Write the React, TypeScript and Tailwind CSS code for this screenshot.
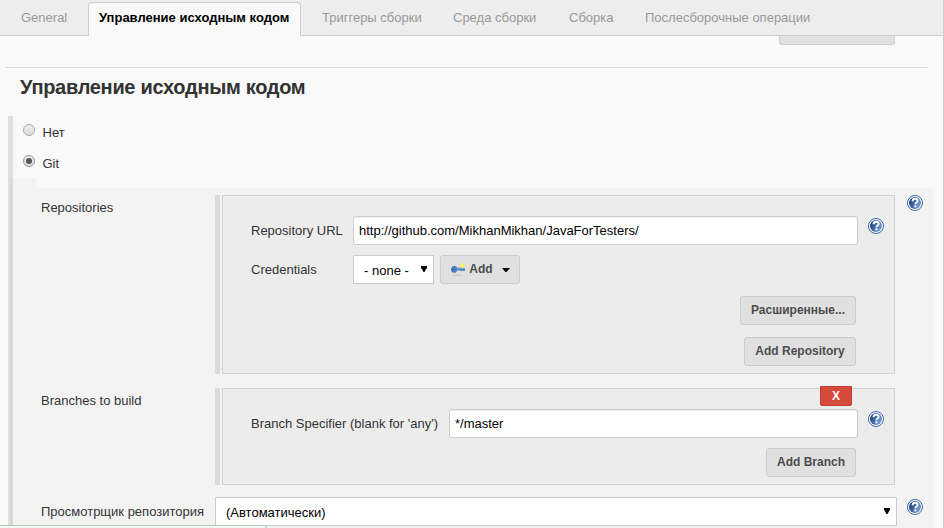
import React, { useId } from "react";

function HelpIcon({ className = "" }: { className?: string }) {
  const id = useId();
  return (
    <svg width="16" height="16" viewBox="0 0 16 16" className={`block shrink-0 ${className}`}>
      <defs>
        <linearGradient id={id} x1="0" y1="0.2" x2="1" y2="0.8">
          <stop offset="0.15" stopColor="#1f4786" />
          <stop offset="1" stopColor="#86a9dc" />
        </linearGradient>
      </defs>
      <circle cx="8" cy="8" r="7.500" fill="#fff" stroke="#3f66a4" strokeWidth="1" />
      <circle cx="8" cy="8" r="6" fill={`url(#${id})`} />
      <path d="M5.500 6.300C5.600 4.600 6.600 3.800 8.100 3.800c1.500 0 2.500.8 2.500 2.100 0 1.600-2.200 1.800-2.200 3.400" fill="none" stroke="#fff" strokeWidth="1.900" />
      <rect x="7.400" y="10.300" width="2" height="2" fill="#fff" />
    </svg>
  );
}

function KeyIcon() {
  return (
    <svg width="16" height="16" viewBox="0 0 16 16" className="block shrink-0">
      <ellipse cx="7" cy="14.300" rx="5.500" ry="0.7" fill="#c9c9c9" />
      <path d="M1 8.500C1 6.300 2.300 5 4.200 5c1.500 0 2.400.7 3 1.700H14l1 1v1.600l-1 .9-1.200-.8-1.300.9-1.200-.8H7.200c-.6 1.400-1.600 2.300-3 2.300C2.300 11.800 1 10.600 1 8.500z" fill="#4b80bb" />
      <path d="M6.500 7.700H14" stroke="#82abd6" strokeWidth="0.9" />
      <circle cx="3.500" cy="8.500" r="1" fill="#35659f" />
      <circle cx="12.500" cy="4.500" r="2.300" fill="#fbf04f" />
      <circle cx="12.500" cy="4.500" r="1" fill="#fffbb0" />
    </svg>
  );
}

function Arrow() {
  return (
    <svg width="6" height="6" viewBox="0 0 6 6" className="block shrink-0">
      <path d="M0 0h6v1.500L3.500 6h-1L0 1.500z" fill="#000" />
    </svg>
  );
}

function Radio({ checked = false }: { checked?: boolean }) {
  return (
    <span
      className={`flex h-3 w-3 items-center justify-center rounded-full border bg-gradient-to-b from-[#eeeeee] to-[#d9d9d9] ${checked ? "border-[#999999]" : "border-[#a8a8a8]"}`}
    >
      {checked && <span className="h-1.5 w-1.5 rounded-full bg-[#555555]" />}
    </span>
  );
}

function Button({ children, className = "" }: { children: React.ReactNode; className?: string }) {
  return (
    <button
      className={`flex h-[29px] shrink-0 items-center justify-center whitespace-nowrap rounded-[3px] border border-[#cccccc] bg-[#e0e0e0] pb-0.5 text-[12px] leading-4 font-bold text-[#4d4d4d] ${className}`}
    >
      {children}
    </button>
  );
}

function Field({ children, className = "" }: { children: React.ReactNode; className?: string }) {
  return (
    <div
      className={`flex h-[29px] shrink-0 items-center whitespace-nowrap rounded-[3px] border border-[#cccccc] bg-white pl-[5px] text-[13px] text-black shadow-[inset_0_1px_1px_rgba(0,0,0,0.08)] ${className}`}
    >
      {children}
    </div>
  );
}

function Panel({ children, className = "" }: { children: React.ReactNode; className?: string }) {
  return (
    <div className={`flex w-[680px] shrink-0 gap-0.5 ${className}`}>
      <div className="w-[5px] bg-[#d9d9d9]" />
      <div className="w-[673px] border border-[#d2d2d2] bg-[#ececec] pl-7">{children}</div>
    </div>
  );
}

function Tab({ children, className = "" }: { children: React.ReactNode; className?: string }) {
  return <div className={`shrink-0 whitespace-nowrap pt-2.5 text-[#999999] ${className}`}>{children}</div>;
}

export default function App() {
  return (
    <div className="relative flex h-[528px] w-[944px] flex-col overflow-hidden border-r border-[#cccccc] bg-[#f9f9f9] font-['Liberation_Sans',Arial,sans-serif] text-[13px] leading-4 text-[#333333]">
      <nav className="flex h-9 shrink-0 border-b border-[#cccccc] bg-[#ededed]">
        <Tab className="w-[88px] pl-[21px]">General</Tab>
        <div className="mt-0.5 h-[34px] w-[213px] shrink-0 whitespace-nowrap rounded-t-[4px] border border-b-0 border-[#cccccc] bg-[#f9f9f9] pt-[7px] pl-2.5 font-bold text-black">
          Управление исходным кодом
        </div>
        <Tab className="w-[152px] pl-[21px]">Триггеры сборки</Tab>
        <Tab className="w-[116px]">Среда сборки</Tab>
        <Tab className="w-[76px]">Сборка</Tab>
        <Tab>Послесборочные операции</Tab>
      </nav>

      <div className="ml-[779px] h-[9px] w-[116px] shrink-0 rounded-b-[3px] border border-t-0 border-[#cccccc] bg-[#e0e0e0]" />
      <div className="mt-[22px] ml-[5px] h-px w-[923px] shrink-0 bg-[#dddddd]" />
      <h1 className="mt-[7px] ml-5 h-6 shrink-0 whitespace-nowrap text-[20px] leading-6 font-bold tracking-[-0.3px]">
        Управление исходным кодом
      </h1>

      <section className="mt-[17px] ml-2 flex h-[412px] w-[925px] shrink-0">
        <div className="flex w-[5px] shrink-0">
          <div className="w-0.5 bg-[#e0e0e0]" />
          <div className="w-[3px] bg-[#d9d9d9]">
            <div className="h-[62px] bg-[#e0e0e0]" />
          </div>
        </div>
        <div className="w-[920px] shrink-0">
          <label className="flex h-[31px] gap-[7px] pt-2 pl-2.5">
            <Radio />
            <span className="pt-px pl-[0.5px]">Нет</span>
          </label>
          <label className="flex h-[31px] gap-[7px] pt-2 pl-2.5">
            <Radio checked />
            <span className="pt-px pl-[0.5px]">Git</span>
          </label>
          <div className="h-2.5 w-[23px] bg-[#f3f3f3]" />

          <div className="h-[340px] bg-[#f3f3f3] pt-[7px] pl-7">
            <div className="flex h-[193px]">
              <div className="w-[174px] shrink-0 pt-[5px]">Repositories</div>
              <Panel className="h-[179px]">
                <div className="mt-5 flex">
                  <span className="w-[102px] pt-[7px]">Repository URL</span>
                  <Field className="w-[505px]">http://github.com/MikhanMikhan/JavaForTesters/</Field>
                  <HelpIcon className="mt-[2px] ml-2.5" />
                </div>
                <div className="mt-2.5 flex">
                  <span className="w-[102px] pt-[7px]">Credentials</span>
                  <div className="flex h-[29px] w-[81px] border border-[#cccccc] bg-white pt-[7px] pl-2.5 text-black">
                    <span className="w-[57px]">- none -</span>
                    <span className="pt-[3px]"><Arrow /></span>
                  </div>
                  <Button className="ml-1.5 w-20">
                    <KeyIcon />
                    <span className="ml-[3px]">Add</span>
                    <svg width="8" height="4" viewBox="0 0 8 4" className="mt-0.5 ml-[9px] block">
                      <path d="M0 0h8L4.500 4h-1z" fill="#000" />
                    </svg>
                  </Button>
                </div>
                <div className="mt-3 flex w-[605px] flex-col items-end gap-3">
                  <Button className="w-[116px]">Расширенные...</Button>
                  <Button className="w-28">Add Repository</Button>
                </div>
              </Panel>
              <HelpIcon className="ml-3" />
            </div>

            <div className="flex h-[109px]">
              <div className="w-[174px] shrink-0 pt-[5px]">Branches to build</div>
              <Panel className="h-[97px]">
                <div className="-mt-[3px] flex w-[601px] justify-end">
                  <button className="flex h-5 w-8 items-center justify-center rounded-b-[2px] border border-[#c03c2e] bg-[#d54a3a] text-[12px] font-bold text-white">
                    X
                  </button>
                </div>
                <div className="mt-[3px] flex">
                  <span className="w-[198px] whitespace-nowrap pt-[7px]">Branch Specifier (blank for 'any')</span>
                  <Field className="w-[409px]">*/master</Field>
                  <HelpIcon className="mt-[2px] ml-2.5" />
                </div>
                <div className="mt-2.5 flex w-[605px] justify-end">
                  <Button className="w-[90px]">Add Branch</Button>
                </div>
              </Panel>
            </div>

            <div className="flex">
              <div className="w-[174px] shrink-0 whitespace-nowrap pt-[7px]">Просмотрщик репозитория</div>
              <div className="flex h-[29px] w-[682px] justify-between border border-[#cccccc] bg-white pt-[7px] pr-[6px] pl-2.5 text-black">
                <span>(Автоматически)</span>
                <span className="pt-[3px]"><Arrow /></span>
              </div>
              <HelpIcon className="mt-0.5 ml-2.5" />
            </div>
          </div>
        </div>
      </section>

      <div className="absolute bottom-0 left-0 h-[3px] w-[267px] rounded-tr-[4px] border-t border-r border-[#b2cdb9] bg-[#f7f9f7]" />
    </div>
  );
}
